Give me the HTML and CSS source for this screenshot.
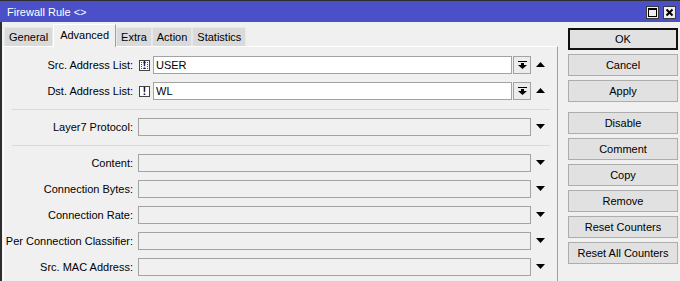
FILE: index.html
```html
<!DOCTYPE html>
<html>
<head>
<meta charset="utf-8">
<link rel="stylesheet" href="styles.css">
</head>
<body>
<div class="window">
  <div class="titlebar">
    <span class="title">Firewall Rule &lt;&gt;</span>
    <div class="tb-btns">
      <span class="tb-btn"><svg width="11" height="11" viewBox="0 0 11 11"><rect x="1.5" y="1.5" width="8" height="8" fill="none" stroke="#000" stroke-width="1"/><rect x="1" y="1" width="9" height="2" fill="#000"/></svg></span>
      <span class="tb-btn"><svg width="11" height="11" viewBox="0 0 11 11"><path d="M2.5 2.5 L8.5 8.5 M8.5 2.5 L2.5 8.5" stroke="#000" stroke-width="2"/></svg></span>
    </div>
  </div>
  <div class="body">
    <div class="main">
      <div class="tabs">
        <span class="tab">General</span>
        <span class="tab active">Advanced</span>
        <span class="tab">Extra</span>
        <span class="tab">Action</span>
        <span class="tab">Statistics</span>
      </div>
      <div class="panel">
        <div class="row">
          <span class="label">Src. Address List:</span>
          <span class="neg dotted">!</span>
          <span class="input white">USER</span>
          <span class="dropbtn"><svg width="9" height="8" viewBox="0 0 9 8"><rect x="0" y="0" width="9" height="1" fill="#000"/><rect x="3" y="2" width="3" height="2" fill="#000"/><polygon points="0,4 9,4 4.5,8" fill="#000"/></svg></span>
          <span class="arrow"><svg width="9" height="5" viewBox="0 0 9 5"><polygon points="4.5,0 9,5 0,5" fill="#000"/></svg></span>
        </div>
        <div class="row">
          <span class="label">Dst. Address List:</span>
          <span class="neg">!</span>
          <span class="input white">WL</span>
          <span class="dropbtn"><svg width="9" height="8" viewBox="0 0 9 8"><rect x="0" y="0" width="9" height="1" fill="#000"/><rect x="3" y="2" width="3" height="2" fill="#000"/><polygon points="0,4 9,4 4.5,8" fill="#000"/></svg></span>
          <span class="arrow"><svg width="9" height="5" viewBox="0 0 9 5"><polygon points="4.5,0 9,5 0,5" fill="#000"/></svg></span>
        </div>
        <div class="sep"></div>
        <div class="row">
          <span class="label">Layer7 Protocol:</span>
          <span class="input wide"></span>
          <span class="arrow"><svg width="9" height="5" viewBox="0 0 9 5"><polygon points="0,0 9,0 4.5,5" fill="#000"/></svg></span>
        </div>
        <div class="sep"></div>
        <div class="row">
          <span class="label">Content:</span>
          <span class="input wide"></span>
          <span class="arrow"><svg width="9" height="5" viewBox="0 0 9 5"><polygon points="0,0 9,0 4.5,5" fill="#000"/></svg></span>
        </div>
        <div class="row">
          <span class="label">Connection Bytes:</span>
          <span class="input wide"></span>
          <span class="arrow"><svg width="9" height="5" viewBox="0 0 9 5"><polygon points="0,0 9,0 4.5,5" fill="#000"/></svg></span>
        </div>
        <div class="row">
          <span class="label">Connection Rate:</span>
          <span class="input wide"></span>
          <span class="arrow"><svg width="9" height="5" viewBox="0 0 9 5"><polygon points="0,0 9,0 4.5,5" fill="#000"/></svg></span>
        </div>
        <div class="row">
          <span class="label">Per Connection Classifier:</span>
          <span class="input wide"></span>
          <span class="arrow"><svg width="9" height="5" viewBox="0 0 9 5"><polygon points="0,0 9,0 4.5,5" fill="#000"/></svg></span>
        </div>
        <div class="row">
          <span class="label">Src. MAC Address:</span>
          <span class="input wide"></span>
          <span class="arrow"><svg width="9" height="5" viewBox="0 0 9 5"><polygon points="0,0 9,0 4.5,5" fill="#000"/></svg></span>
        </div>
      </div>
    </div>
    <div class="side">
      <span class="btn default">OK</span>
      <span class="btn">Cancel</span>
      <span class="btn">Apply</span>
      <span class="btn group">Disable</span>
      <span class="btn">Comment</span>
      <span class="btn">Copy</span>
      <span class="btn">Remove</span>
      <span class="btn">Reset Counters</span>
      <span class="btn">Reset All Counters</span>
    </div>
  </div>
</div>
</body>
</html>
```

FILE: styles.css
```css
* { box-sizing: border-box; }
html, body { margin: 0; padding: 0; }
body {
  font-family: "Liberation Sans", Arial, sans-serif;
  font-size: 11px;
  color: #000;
  background: #f0f0f0;
}
.window {
  width: 680px;
  height: 281px;
  overflow: hidden;
  display: flex;
  flex-direction: column;
  background: #f0f0f0;
}
.titlebar {
  height: 22px;
  flex: none;
  background: #4b50c8;
  border-top: 1px solid #2e2e2e;
  display: flex;
  align-items: center;
  justify-content: space-between;
  padding: 0 4px 0 7px;
}
.title {
  color: #fff;
  font-size: 11px;
  padding-top: 1px;
}
.tb-btns {
  display: flex;
  gap: 4px;
  padding-top: 2px;
}
.tb-btn {
  width: 13px;
  height: 13px;
  background: #f0f0f0;
  border: 1px solid #3a3a3a;
  display: flex;
  align-items: center;
  justify-content: center;
}
.tb-btn svg { display: block; }
.body {
  flex: 1;
  display: flex;
  border-left: 2px solid #2e2e2e;
}
.main {
  width: 555px;
  margin-left: 1px;
  display: flex;
  flex-direction: column;
}
.tabs {
  height: 24px;
  display: flex;
  align-items: flex-end;
  padding-left: 1px;
  position: relative;
  z-index: 1;
}
.tab {
  height: 19px;
  padding: 0 4px;
  background: #dadada;
  border: 1px solid #e8e8e8;
  border-bottom: none;
  display: flex;
  align-items: center;
}
.tab.active {
  height: 23px;
  padding: 0 6px 3px;
  background: #f0f0f0;
  border-top: 1px solid #ffffff;
  border-left: 1px solid #ffffff;
  border-right: 1px solid #a0a0a0;
  margin-bottom: -1px;
}
.panel {
  flex: 1;
  background: #f0f0f0;
  border-top: 1px solid #ffffff;
  border-left: 1px solid #ffffff;
  border-right: 1px solid #a0a0a0;
  padding-top: 9px;
  display: flex;
  flex-direction: column;
  gap: 8px;
}
.row {
  height: 18px;
  display: flex;
  align-items: center;
  flex: none;
}
.label {
  width: 134px;
  text-align: right;
  padding-right: 5px;
  white-space: nowrap;
  flex: none;
}
.neg {
  width: 11px;
  height: 11px;
  margin: 0 3px 0 1px;
  border: 1px solid #444;
  background: #fff;
  font-weight: bold;
  font-size: 10px;
  line-height: 9px;
  text-align: center;
  flex: none;
}
.neg.dotted {
  background: #fff;
  outline: 1px dotted #555;
  outline-offset: -3px;
}
.input {
  height: 18px;
  border: 1px solid #a3a3a3;
  background: #f0f0f0;
  padding-left: 2px;
  display: flex;
  align-items: center;
  flex: none;
}
.input.white {
  width: 359px;
  background: #fff;
}
.input.wide {
  width: 393px;
}
.dropbtn {
  width: 18px;
  height: 18px;
  margin-left: 1px;
  border: 1px solid #a3a3a3;
  background: #ececec;
  display: flex;
  align-items: center;
  justify-content: center;
  flex: none;
}
.dropbtn svg { display: block; }
.arrow {
  width: 19px;
  display: flex;
  align-items: center;
  justify-content: center;
  flex: none;
  padding-bottom: 1px;
}
.arrow svg { display: block; }
.sep {
  height: 1px;
  background: #d9d9d9;
  margin: 1px 7px 0 8px;
  flex: none;
}
.side {
  width: 110px;
  margin-left: 10px;
  padding-top: 6px;
  display: flex;
  flex-direction: column;
  gap: 4px;
}
.btn {
  height: 22px;
  background: #e1e1e1;
  border: 1px solid #adadad;
  display: flex;
  align-items: center;
  justify-content: center;
  white-space: nowrap;
}
.btn.default {
  border: 2px solid #111;
}
.btn.group {
  margin-top: 6px;
}
```
